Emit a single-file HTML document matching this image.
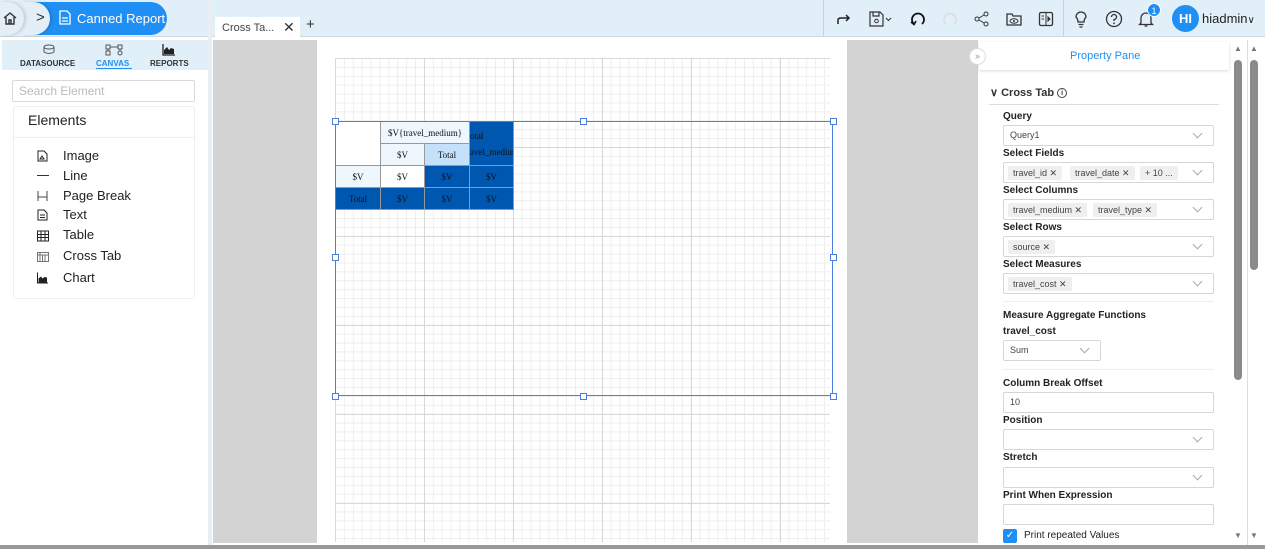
<!DOCTYPE html>
<html><head><meta charset="utf-8"><style>
*{box-sizing:border-box;margin:0;padding:0}
body{width:1265px;height:549px;overflow:hidden;background:#fff;font-family:"Liberation Sans",sans-serif;position:relative;color:#222}
.a{position:absolute}
.lbl{font-size:10px;font-weight:bold;color:#222;left:1003px}
.sel{left:1003px;width:211px;height:21px;border:1px solid #d6d6d6;border-radius:2px;background:#fff}
.chip{position:absolute;top:3px;height:14px;background:#efefef;font-size:9px;color:#444;line-height:14px;padding:0 5px;border-radius:2px}
.chev{position:absolute;right:12px;top:4px;width:7px;height:7px;border-right:1px solid #aaa;border-bottom:1px solid #aaa;transform:rotate(45deg)}
.el{left:63px;font-size:13px;color:#222}
.ic{left:37px;width:11px;height:12px}
td{border:1px solid #999;font-family:"Liberation Serif",serif;font-size:9px;text-align:center;color:#111;padding:0;overflow:hidden}
.h{position:absolute;width:7px;height:7px;border:1px solid #4a7fe0;background:#fff}
.tb{top:11px;width:16px;height:16px}
</style></head><body>
<div class="a" style="left:0;top:0;width:1265px;height:37px;background:#e1eff9;border-bottom:1px solid #cfd8df"></div>
<div class="a" style="left:208px;top:0;width:4px;height:549px;background:#e9eef2"></div>
<div class="a" style="left:33px;top:2px;width:134px;height:33px;border-radius:0 17px 17px 0;background:#1f8ff5"></div>
<div class="a" style="left:22px;top:2px;width:28px;height:33px;border-radius:0 17px 17px 0;background:#e4eef6;box-shadow:2px 0 3px rgba(0,0,0,.15)"></div>
<div class="a" style="left:0;top:2px;width:24px;height:33px;border-radius:0 17px 17px 0;background:#e4eef6;box-shadow:2px 0 3px rgba(0,0,0,.15)"></div>
<svg class="a" style="left:2px;top:11px" width="16" height="15" viewBox="0 0 16 15"><path d="M2 7L8 2L14 7M4 6V13H12V6M7 13V9H9V13" fill="none" stroke="#333" stroke-width="1.4"/></svg>
<div class="a" style="left:36px;top:9px;font-size:15px;color:#333">&gt;</div>
<svg class="a" style="left:59px;top:10px" width="12" height="15" viewBox="0 0 12 15"><path d="M1 1H8L11 4V14H1Z M3 8H9M3 11H9" fill="none" stroke="#fff" stroke-width="1.3"/></svg>
<div class="a" style="left:77px;top:11px;font-size:13px;color:#fff">Canned Report</div>
<div class="a" style="left:215px;top:17px;width:85px;height:20px;background:#fff"></div>
<div class="a" style="left:222px;top:22px;font-size:11px;color:#444">Cross Ta...</div>
<div class="a" style="left:283px;top:19px;font-size:14px;color:#333">✕</div>
<div class="a" style="left:306px;top:16px;font-size:15px;color:#333">+</div>
<div class="a" style="left:823px;top:0;width:1px;height:37px;background:#c9d3db"></div>
<div class="a" style="left:1063px;top:0;width:1px;height:37px;background:#c9d3db"></div>
<svg class="a tb" style="left:836px" viewBox="0 0 16 16"><path d="M2 13V9Q2 7 5 7H13M10 4L13 7L10 10" fill="none" stroke="#222" stroke-width="1.5"/></svg>
<svg class="a tb" style="left:869px;width:26px" viewBox="0 0 26 16"><path d="M1 1H11L14 4V15H1Z M4 1V5H10V1" fill="none" stroke="#333" stroke-width="1.2"/><circle cx="7.5" cy="10" r="1.8" fill="none" stroke="#333"/><path d="M17 7L19.5 9.5L22 7" fill="none" stroke="#333"/></svg>
<svg class="a tb" style="left:910px" viewBox="0 0 16 16"><path d="M4 13A6 6 0 1 1 12 13" fill="none" stroke="#111" stroke-width="1.8"/><path d="M1 11L4 13.5L6 10" fill="none" stroke="#111" stroke-width="1.6"/></svg>
<svg class="a tb" style="left:942px" viewBox="0 0 16 16"><path d="M4 13A6 6 0 1 1 12 13" fill="none" stroke="#ddd" stroke-width="1.8"/></svg>
<svg class="a tb" style="left:974px" viewBox="0 0 16 16"><circle cx="12" cy="3" r="2" fill="none" stroke="#333"/><circle cx="3" cy="8" r="2" fill="none" stroke="#333"/><circle cx="12" cy="13" r="2" fill="none" stroke="#333"/><path d="M5 7L10 4M5 9L10 12" stroke="#333"/></svg>
<svg class="a tb" style="left:1006px" viewBox="0 0 16 16"><path d="M1 3H6L7 5H15V14H1Z" fill="none" stroke="#333" stroke-width="1.3"/><ellipse cx="8" cy="10" rx="4" ry="2.2" fill="none" stroke="#333"/><circle cx="8" cy="10" r="1" fill="#333"/></svg>
<svg class="a tb" style="left:1038px" viewBox="0 0 16 16"><rect x="1.5" y="1.5" width="13" height="13" rx="1.5" fill="none" stroke="#333" stroke-width="1.3"/><path d="M8 1.5V14.5M3.5 5H6M3.5 8H6M10 6V10L12 8Z" stroke="#333" fill="#333"/></svg>
<svg class="a tb" style="left:1073px;top:10px;height:18px" viewBox="0 0 16 18"><path d="M5 12Q5 9 3 7A5 5 0 1 1 13 7Q11 9 11 12Z M5.5 14.5H10.5M6.5 17H9.5" fill="none" stroke="#333" stroke-width="1.3"/></svg>
<svg class="a tb" style="left:1105px;top:10px;width:18px;height:18px" viewBox="0 0 18 18"><circle cx="9" cy="9" r="7.5" fill="none" stroke="#333" stroke-width="1.3"/><path d="M6.5 7A2.5 2.5 0 1 1 9 9.5V11" fill="none" stroke="#333" stroke-width="1.3"/><circle cx="9" cy="13.3" r=".9" fill="#333"/></svg>
<svg class="a tb" style="left:1138px;top:10px;height:18px" viewBox="0 0 16 18"><path d="M3 13V8A5 5 0 0 1 13 8V13L14.5 14.5H1.5Z M6.5 16H9.5" fill="none" stroke="#333" stroke-width="1.3"/></svg>
<div class="a" style="left:1147px;top:3px;width:14px;height:14px;border-radius:7px;background:#1f8ff5;color:#fff;font-size:9px;text-align:center;line-height:14px;border:1px solid #fff">1</div>
<div class="a" style="left:1172px;top:5px;width:27px;height:27px;border-radius:14px;background:#1f8ff5;color:#fff;font-size:13px;font-weight:bold;text-align:center;line-height:27px">HI</div>
<div class="a" style="left:1202px;top:11px;font-size:13px;color:#222">hiadmin<span style="font-size:10px">∨</span></div>
<div class="a" style="left:2px;top:40px;width:206px;height:30px;background:#e1eff9"></div>
<svg class="a" style="left:42px;top:44px" width="14" height="12" viewBox="0 0 14 12"><ellipse cx="7" cy="3" rx="5" ry="2" fill="none" stroke="#555"/><path d="M2 3V8Q7 11 12 8V3" fill="none" stroke="#555"/></svg>
<div class="a" style="left:20px;top:59px;font-size:8px;font-weight:bold;color:#333">DATASOURCE</div>
<svg class="a" style="left:105px;top:44px" width="18" height="12" viewBox="0 0 18 12"><rect x="1" y="1" width="4" height="4" fill="none" stroke="#555"/><rect x="13" y="1" width="4" height="4" fill="none" stroke="#555"/><rect x="1" y="7" width="4" height="4" fill="none" stroke="#555"/><circle cx="15" cy="9" r="2" fill="none" stroke="#555"/><path d="M5 3H13M3 5V7M15 5V7" stroke="#555"/></svg>
<div class="a" style="left:96px;top:59px;font-size:8px;font-weight:bold;color:#1f8ff5">CANVAS</div>
<div class="a" style="left:96px;top:68px;width:36px;height:1px;background:#1f8ff5"></div>
<svg class="a" style="left:162px;top:44px" width="13" height="12" viewBox="0 0 13 12"><path d="M1 0V11H13" fill="none" stroke="#222" stroke-width="1.3"/><path d="M2 10V6L5 3L7 6L9 4L12 5V10Z" fill="#222"/></svg>
<div class="a" style="left:150px;top:59px;font-size:8px;font-weight:bold;color:#333">REPORTS</div>
<div class="a" style="left:12px;top:80px;width:183px;height:22px;border:1px solid #d9d9d9;border-radius:2px;font-size:12px;color:#bbb;padding:3px 6px">Search Element</div>
<div class="a" style="left:13px;top:106px;width:182px;height:193px;border:1px solid #eee;border-radius:3px"></div>
<div class="a" style="left:13px;top:137px;width:182px;height:1px;background:#eee"></div>
<div class="a" style="left:28px;top:112px;font-size:14px;color:#222">Elements</div>
<svg class="a ic" style="top:150px" viewBox="0 0 11 12"><path d="M1 1H7L10 4V11H1Z M3 9L5 6L7 9Z" fill="none" stroke="#222"/></svg><div class="a el" style="top:148px">Image</div>
<div class="a" style="left:37px;top:175px;width:12px;height:1px;background:#333"></div><div class="a el" style="top:168px">Line</div>
<svg class="a ic" style="top:190px" viewBox="0 0 11 12"><path d="M1 1V11M10 1V11M1 7H10" fill="none" stroke="#444"/></svg><div class="a el" style="top:188px">Page Break</div>
<svg class="a ic" style="top:209px" viewBox="0 0 11 12"><path d="M1 1H7L10 4V11H1Z M3 6H8M3 8.5H8" fill="none" stroke="#222"/></svg><div class="a el" style="top:207px">Text</div>
<svg class="a ic" style="top:230px;width:12px" viewBox="0 0 12 11"><path d="M.5 .5H11.5V10.5H.5Z M.5 4H11.5M.5 7H11.5M4 .5V10.5M8 .5V10.5" fill="none" stroke="#222"/></svg><div class="a el" style="top:227px">Table</div>
<svg class="a ic" style="top:251px;width:12px" viewBox="0 0 12 10"><path d="M.5 .5H11.5V9.5H.5Z M.5 3H11.5M3 .5V9.5M5.5 3V9.5M8 3V9.5" fill="none" stroke="#777"/></svg><div class="a el" style="top:248px">Cross Tab</div>
<svg class="a ic" style="top:272px" viewBox="0 0 11 11"><path d="M.5 0V10.5H11" fill="none" stroke="#222"/><path d="M1.5 10V6L4 4L5.5 6L7.5 4.5L10 5V10Z" fill="#222"/></svg><div class="a el" style="top:270px">Chart</div>
<div class="a" style="left:213px;top:40px;width:104px;height:503px;background:#d3d3d3"></div>
<div class="a" style="left:847px;top:40px;width:131px;height:503px;background:#d3d3d3"></div>
<div class="a" style="left:335px;top:58px;width:495px;height:484px;background-image:linear-gradient(#d8d8d8 1px,transparent 1px),linear-gradient(90deg,#d8d8d8 1px,transparent 1px),linear-gradient(#eee 1px,transparent 1px),linear-gradient(90deg,#eee 1px,transparent 1px);background-size:89px 89px,89px 89px,8.9px 8.9px,8.9px 8.9px"></div>
<table class="a" style="left:335px;top:121px;border-collapse:collapse;background:#fff;table-layout:fixed;width:178px">
<colgroup><col style="width:45px"><col style="width:44px"><col style="width:45px"><col style="width:44px"></colgroup>
<tr style="height:22px"><td rowspan="2" style="border-color:#fff #999 #999 #fff"></td><td colspan="2" style="background:#eef6fe">$V{travel_medium}</td><td rowspan="2" style="background:#0057b0;text-align:left;white-space:nowrap;line-height:16px">otal<br>avel_medium</td></tr>
<tr style="height:22px"><td style="background:#eef6fe">$V</td><td style="background:#c5e0fa">Total</td></tr>
<tr style="height:22px"><td style="background:#eef6fe">$V</td><td>$V</td><td style="background:#0057b0">$V</td><td style="background:#0057b0">$V</td></tr>
<tr style="height:22px"><td style="background:#0057b0">Total</td><td style="background:#0057b0">$V</td><td style="background:#0057b0">$V</td><td style="background:#0057b0">$V</td></tr>
</table>
<div class="a" style="left:335px;top:121px;width:498px;height:275px;border:1px solid #4a7fe0"></div>
<div class="h" style="left:332px;top:118px"></div><div class="h" style="left:580px;top:118px"></div><div class="h" style="left:830px;top:118px"></div>
<div class="h" style="left:332px;top:254px"></div><div class="h" style="left:830px;top:254px"></div>
<div class="h" style="left:332px;top:393px"></div><div class="h" style="left:580px;top:393px"></div><div class="h" style="left:830px;top:393px"></div>
<div class="a" style="left:0;top:545px;width:1265px;height:4px;background:#999"></div>
<div class="a" style="left:978px;top:40px;width:254px;height:505px;background:#fff"></div>
<div class="a" style="left:979px;top:42px;width:250px;height:28px;background:#fff;box-shadow:0 1px 3px rgba(0,0,0,.15)"></div>
<div class="a" style="left:969px;top:48px;width:17px;height:17px;border-radius:9px;background:#fff;border:1px solid #ddd;font-size:9px;color:#999;text-align:center;line-height:15px">»</div>
<div class="a" style="left:1070px;top:50px;font-size:11px;color:#1f8ff5">Property Pane</div>
<div class="a" style="left:990px;top:86px;font-size:11px;font-weight:bold;color:#333">∨ Cross Tab <span style="display:inline-block;width:10px;height:10px;border:1px solid #444;border-radius:6px;font-size:7px;text-align:center;line-height:9px;vertical-align:1px">i</span></div>
<div class="a" style="left:989px;top:104px;width:230px;height:1px;background:#ddd"></div>
<div class="a lbl" style="top:111px">Query</div>
<div class="a sel" style="top:125px"><span class="a" style="left:6px;top:4px;font-size:9px;color:#444">Query1</span><i class="chev"></i></div>
<div class="a lbl" style="top:148px">Select Fields</div>
<div class="a sel" style="top:162px"><span class="chip" style="left:4px">travel_id ✕</span><span class="chip" style="left:66px">travel_date ✕</span><span class="chip" style="left:136px">+ 10 ...</span><i class="chev"></i></div>
<div class="a lbl" style="top:185px">Select Columns</div>
<div class="a sel" style="top:199px"><span class="chip" style="left:4px">travel_medium ✕</span><span class="chip" style="left:89px">travel_type ✕</span><i class="chev"></i></div>
<div class="a lbl" style="top:222px">Select Rows</div>
<div class="a sel" style="top:236px"><span class="chip" style="left:4px">source ✕</span><i class="chev"></i></div>
<div class="a lbl" style="top:259px">Select Measures</div>
<div class="a sel" style="top:273px"><span class="chip" style="left:4px">travel_cost ✕</span><i class="chev"></i></div>
<div class="a" style="left:1003px;top:301px;width:211px;height:1px;background:#eee"></div>
<div class="a lbl" style="top:310px">Measure Aggregate Functions</div>
<div class="a lbl" style="top:326px">travel_cost</div>
<div class="a sel" style="top:340px;width:98px"><span class="a" style="left:6px;top:4px;font-size:9px;color:#444">Sum</span><i class="chev"></i></div>
<div class="a" style="left:1003px;top:369px;width:211px;height:1px;background:#eee"></div>
<div class="a lbl" style="top:378px">Column Break Offset</div>
<div class="a sel" style="top:392px"><span class="a" style="left:6px;top:4px;font-size:9px;color:#444">10</span></div>
<div class="a lbl" style="top:415px">Position</div>
<div class="a sel" style="top:429px"><i class="chev"></i></div>
<div class="a lbl" style="top:452px">Stretch</div>
<div class="a sel" style="top:467px"><i class="chev"></i></div>
<div class="a lbl" style="top:490px">Print When Expression</div>
<div class="a sel" style="top:504px"></div>
<div class="a" style="left:1003px;top:529px;width:14px;height:14px;background:#1f8ff5;border-radius:2px;color:#fff;font-size:10px;text-align:center;line-height:14px">✓</div>
<div class="a" style="left:1024px;top:530px;font-size:10px;color:#222">Print repeated Values</div>
<div class="a" style="left:1232px;top:40px;width:33px;height:505px;background:#fff"></div>
<div class="a" style="left:1247px;top:40px;width:1px;height:505px;background:#ddd"></div>
<div class="a" style="left:1234px;top:44px;font-size:8px;color:#777">▲</div>
<div class="a" style="left:1250px;top:44px;font-size:8px;color:#777">▲</div>
<div class="a" style="left:1234px;top:60px;width:8px;height:320px;border-radius:4px;background:#8a8a8a"></div>
<div class="a" style="left:1250px;top:60px;width:8px;height:210px;border-radius:4px;background:#8a8a8a"></div>
<div class="a" style="left:1234px;top:531px;font-size:8px;color:#777">▼</div>
<div class="a" style="left:1250px;top:531px;font-size:8px;color:#777">▼</div>
</body></html>
